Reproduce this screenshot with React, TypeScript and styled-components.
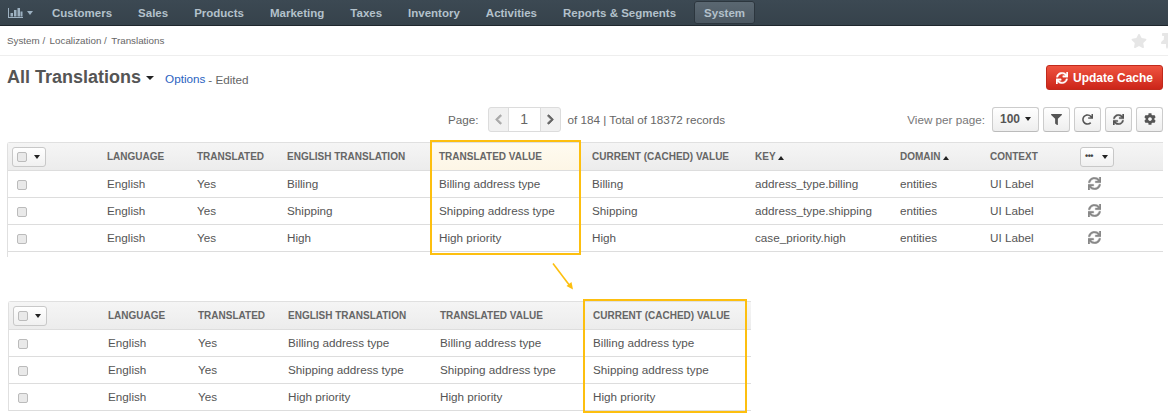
import { createGlobalStyle, styled } from 'styled-components';
import { FaChevronLeft, FaChevronRight, FaCog, FaFilter, FaRedo, FaStar, FaSync, FaThumbtack } from 'react-icons/fa';

const GlobalStyle = createGlobalStyle`
  html, body {
    margin: 0;
    padding: 0;
    background: #fff;
    overflow: hidden;
  }
  body {
    font-family: "Liberation Sans", Arial, sans-serif;
    font-size: 11.7px;
    color: #555;
  }
`;

const Page = styled.div`
  position: relative;
  width: 1168px;
  height: 414px;
  overflow: hidden;
`;

const NavBar = styled.nav`
  height: 25px;
  display: flex;
  align-items: center;
  padding-left: 8px;
  background: linear-gradient(#3c4953, #36424b);
  border-bottom: 1px solid #1f272d;
  color: #b3c1cb;
`;

const NavLogo = styled.div`
  display: flex;
  align-items: center;
  gap: 4px;
  width: 44px;
  color: #9db1c1;
`;

const NavItem = styled.a<{ $active?: boolean }>`
  margin-right: ${(p) => (p.$active ? '0' : '26px')};
  padding: ${(p) => (p.$active ? '4.5px 10px' : '0')};
  margin-left: ${(p) => (p.$active ? '-8px' : '0')};
  font-weight: bold;
  font-size: 11.5px;
  line-height: 14px;
  border-radius: 3px;
  background: ${(p) => (p.$active ? 'linear-gradient(#5b6872, #4b5761)' : 'transparent')};
  box-shadow: ${(p) => (p.$active ? 'inset 0 0 0 1px #2c363e' : 'none')};
`;

const Caret = styled.span<{ $color?: string; $up?: boolean; $size?: number }>`
  display: inline-block;
  width: 0;
  height: 0;
  border-left: ${(p) => p.$size ?? 4}px solid transparent;
  border-right: ${(p) => p.$size ?? 4}px solid transparent;
  ${(p) => (p.$up ? 'border-bottom' : 'border-top')}: 4px solid ${(p) => p.$color ?? '#222'};
`;

const Breadcrumbs = styled.div`
  height: 29px;
  display: flex;
  align-items: center;
  justify-content: space-between;
  padding-left: 7px;
  border-bottom: 1px solid #eee;
  font-size: 9.8px;
  color: #666;
`;

const Crumbs = styled.div`
  display: flex;
  gap: 4.5px;
`;

const PageTools = styled.div`
  display: flex;
  gap: 12px;
  margin-right: -7px;
  color: #e6e6e6;
  font-size: 16px;
`;

const TitleRow = styled.div`
  display: flex;
  align-items: flex-start;
  justify-content: space-between;
  padding: 9px 5px 0 7px;
  height: 41px;
`;

const TitleGroup = styled.div`
  display: flex;
  align-items: center;
  height: 25px;
`;

const Title = styled.h1`
  margin: 0 5px 0 0;
  font-size: 18px;
  line-height: 25px;
  font-weight: bold;
  color: #555;
`;

const Options = styled.a`
  margin: 2px 0 0 11px;
  color: #2a62bf;
`;

const Edited = styled.span`
  margin: 3px 0 0 3px;
  color: #666;
`;

const DangerButton = styled.button`
  display: flex;
  align-items: center;
  justify-content: center;
  gap: 5px;
  width: 117px;
  height: 25px;
  padding: 0;
  border: 1px solid #c12a1c;
  border-radius: 3px;
  background: linear-gradient(#ef5440, #cc2519);
  color: #fff;
  font: bold 12px "Liberation Sans", Arial, sans-serif;
`;

const Toolbar = styled.div`
  display: grid;
  grid-template-columns: 448px 1fr auto;
  align-items: center;
  height: 26px;
  padding-right: 5px;
  margin-bottom: 10px;
`;

const Pager = styled.div`
  grid-column: 2;
  display: flex;
  align-items: center;
  color: #666;
`;

const PagerBox = styled.div`
  display: flex;
  height: 23px;
  margin: 0 7px 0 9px;
  border: 1px solid #dcdcdc;
  border-radius: 3px;
  background: #f1f1f1;
`;

const PagerArrow = styled.span<{ $dim?: boolean }>`
  width: 19px;
  display: flex;
  align-items: center;
  justify-content: center;
  font-size: 11px;
  color: ${(p) => (p.$dim ? '#aaa' : '#666')};

  svg {
    stroke: currentColor;
    stroke-width: 40;
  }
`;

const PagerInput = styled.span`
  width: 31px;
  display: flex;
  align-items: center;
  justify-content: center;
  background: #fff;
  border-left: 1px solid #dcdcdc;
  border-right: 1px solid #dcdcdc;
  font-size: 14px;
`;

const ViewTools = styled.div`
  display: flex;
  align-items: center;
  gap: 4px;
  grid-column: 3;
`;

const ViewLabel = styled.span`
  margin-right: 3px;
  color: #777;
`;

const ToolButton = styled.button<{ $wide?: boolean }>`
  display: flex;
  align-items: center;
  justify-content: center;
  gap: 5px;
  width: ${(p) => (p.$wide ? '47px' : '27px')};
  height: 25px;
  padding: 0;
  border: 1px solid #ccc;
  border-bottom-color: #bbb;
  border-radius: 3px;
  background: linear-gradient(#fff, #eee);
  color: #555;
  font: bold 12px "Liberation Sans", Arial, sans-serif;
`;

const TableWrap = styled.div<{ $width: number; $left: number; $mt: number }>`
  position: relative;
  width: ${(p) => p.$width}px;
  margin: ${(p) => p.$mt}px 0 0 ${(p) => p.$left}px;
`;

const Table = styled.table`
  width: 100%;
  border-collapse: separate;
  border-spacing: 0;
  table-layout: fixed;
  border-left: 1px solid #e0e0e0;
  border-top: 1px solid #e0e0e0;
  border-top-left-radius: 3px;
`;

const Col = styled.col<{ $w: number }>`
  width: ${(p) => p.$w}px;
`;

const HeadCell = styled.th<{ $hl?: boolean; $pl?: number }>`
  height: 27px;
  padding: 0 0 0 ${(p) => p.$pl ?? 0}px;
  text-align: left;
  font-size: 10px;
  font-weight: bold;
  color: #666;
  white-space: nowrap;
  border-bottom: 1px solid #ddd;
  background: ${(p) => (p.$hl ? 'linear-gradient(#fffbf0, #fdf6e6)' : 'linear-gradient(#f5f5f5, #ececec)')};
`;

const Cell = styled.td<{ $pl?: number }>`
  height: 25px;
  padding: 0 0 1px ${(p) => p.$pl ?? 0}px;
  color: #555;
  white-space: nowrap;
  border-bottom: 1px solid #ddd;
`;

const HeadControl = styled.span<{ $ml?: number }>`
  display: inline-flex;
  align-items: center;
  justify-content: space-between;
  box-sizing: border-box;
  width: 34px;
  height: 20px;
  margin-left: ${(p) => p.$ml ?? 0}px;
  padding: 0 5px 0 4px;
  border: 1px solid #c8c8c8;
  border-radius: 3px;
  background: linear-gradient(#fff, #f0f0f0);
  vertical-align: middle;
`;

const CheckBox = styled.span<{ $inCell?: boolean }>`
  display: inline-block;
  box-sizing: border-box;
  width: 10px;
  height: 10px;
  margin-left: ${(p) => (p.$inCell ? '9px' : '0')};
  border: 1px solid #bbb;
  border-radius: 2px;
  background: #e9e9e9;
  vertical-align: middle;
`;

const Dots = styled.span`
  font-size: 9px;
  line-height: 8px;
  height: 10px;
  font-weight: bold;
  letter-spacing: -0.5px;
  color: #444;
`;

const RowIcon = styled.span`
  display: flex;
  align-items: center;
  margin-left: 8px;
  color: #888;
`;

const HighlightBox = styled.div<{ $x: number; $y: number; $w: number; $h: number }>`
  position: absolute;
  left: ${(p) => p.$x}px;
  top: ${(p) => p.$y}px;
  width: ${(p) => p.$w}px;
  height: ${(p) => p.$h}px;
  box-sizing: border-box;
  border: 2px solid #fdbf0f;
  pointer-events: none;
`;

const Arrow = styled.svg`
  position: absolute;
  left: 548px;
  top: 260px;
`;

const LeftEdge = styled.div`
  width: 1px;
  height: 5px;
  background: #e0e0e0;
`;

const topWidths = [99, 90, 90, 144, 149, 175, 145, 90, 90, 83];
const topRows = [
  ['Billing', 'Billing address type', 'Billing', 'address_type.billing'],
  ['Shipping', 'Shipping address type', 'Shipping', 'address_type.shipping'],
  ['High', 'High priority', 'High', 'case_priority.high'],
];
const bottomWidths = [99, 90, 90, 152, 153, 158];
const bottomRows = ['Billing address type', 'Shipping address type', 'High priority'];

function ChartIcon() {
  return (
    <svg width="15" height="10" viewBox="0 0 15 10" fill="currentColor">
      <path d="M0 0h1v9h14v1H0z" />
      <path d="M2.5 5H5v3.5H2.5zM6 2h2.5v6.5H6zM9.5 0H12v8.5H9.5zM12.5 3.5h2v5h-2z" />
    </svg>
  );
}

function BoldSync({ size }: { size: number }) {
  return <FaSync size={size} stroke="currentColor" strokeWidth={14} />;
}

function SelectAll({ ml }: { ml: number }) {
  return (
    <HeadControl $ml={ml}>
      <CheckBox />
      <Caret $size={3.5} />
    </HeadControl>
  );
}

export default function App() {
  return (
    <Page>
      <GlobalStyle />
      <NavBar>
        <NavLogo>
          <ChartIcon />
          <Caret $color="#9db1c1" $size={3} />
        </NavLogo>
        {['Customers', 'Sales', 'Products', 'Marketing', 'Taxes', 'Inventory', 'Activities', 'Reports & Segments'].map((item) => (
          <NavItem key={item}>{item}</NavItem>
        ))}
        <NavItem $active>System</NavItem>
      </NavBar>
      <Breadcrumbs>
        <Crumbs>
          <span>System /</span>
          <span>Localization /</span>
          <span>Translations</span>
        </Crumbs>
        <PageTools>
          <FaStar />
          <FaThumbtack />
        </PageTools>
      </Breadcrumbs>
      <TitleRow>
        <TitleGroup>
          <Title>All Translations</Title>
          <Caret />
          <Options>Options</Options>
          <Edited>- Edited</Edited>
        </TitleGroup>
        <DangerButton>
          <BoldSync size={12} />
          Update Cache
        </DangerButton>
      </TitleRow>
      <Toolbar>
        <Pager>
          Page:
          <PagerBox>
            <PagerArrow $dim><FaChevronLeft /></PagerArrow>
            <PagerInput>1</PagerInput>
            <PagerArrow><FaChevronRight /></PagerArrow>
          </PagerBox>
          of 184 | Total of 18372 records
        </Pager>
        <ViewTools>
          <ViewLabel>View per page:</ViewLabel>
          <ToolButton $wide>100 <Caret $size={3.5} /></ToolButton>
          <ToolButton><FaFilter size={11} /></ToolButton>
          <ToolButton><FaRedo size={11} /></ToolButton>
          <ToolButton><BoldSync size={11} /></ToolButton>
          <ToolButton><FaCog size={12} /></ToolButton>
        </ViewTools>
      </Toolbar>

      <TableWrap $width={1156} $left={7} $mt={0}>
        <Table>
          <colgroup>
            {topWidths.map((w, i) => <Col key={i} $w={w} />)}
          </colgroup>
          <thead>
            <tr>
              <HeadCell><SelectAll ml={4} /></HeadCell>
              <HeadCell>LANGUAGE</HeadCell>
              <HeadCell>TRANSLATED</HeadCell>
              <HeadCell>ENGLISH TRANSLATION</HeadCell>
              <HeadCell $hl $pl={8}>TRANSLATED VALUE</HeadCell>
              <HeadCell $pl={12}>CURRENT (CACHED) VALUE</HeadCell>
              <HeadCell>KEY <Caret $up $size={3.5} /></HeadCell>
              <HeadCell>DOMAIN <Caret $up $size={3.5} /></HeadCell>
              <HeadCell>CONTEXT</HeadCell>
              <HeadCell>
                <HeadControl><Dots>•••</Dots><Caret $size={3.5} /></HeadControl>
              </HeadCell>
            </tr>
          </thead>
          <tbody>
            {topRows.map((row) => (
              <tr key={row[3]}>
                <Cell><CheckBox $inCell /></Cell>
                <Cell>English</Cell>
                <Cell>Yes</Cell>
                <Cell>{row[0]}</Cell>
                <Cell $pl={8}>{row[1]}</Cell>
                <Cell $pl={12}>{row[2]}</Cell>
                <Cell>{row[3]}</Cell>
                <Cell>entities</Cell>
                <Cell>UI Label</Cell>
                <Cell><RowIcon><BoldSync size={13} /></RowIcon></Cell>
              </tr>
            ))}
          </tbody>
        </Table>
        <LeftEdge />
        <HighlightBox $x={423} $y={-2} $w={151} $h={115} />
      </TableWrap>

      <Arrow width="32" height="34" viewBox="0 0 32 34">
        <path d="M5 3.5 L22 26" stroke="#fdbf0f" strokeWidth="1.6" fill="none" />
        <path d="M25 29.5 L18.5 26 L23.5 22 Z" fill="#fdbf0f" />
      </Arrow>

      <TableWrap $width={743} $left={8} $mt={44}>
        <Table>
          <colgroup>
            {bottomWidths.map((w, i) => <Col key={i} $w={w} />)}
          </colgroup>
          <thead>
            <tr>
              <HeadCell><SelectAll ml={4} /></HeadCell>
              <HeadCell>LANGUAGE</HeadCell>
              <HeadCell>TRANSLATED</HeadCell>
              <HeadCell>ENGLISH TRANSLATION</HeadCell>
              <HeadCell>TRANSLATED VALUE</HeadCell>
              <HeadCell>CURRENT (CACHED) VALUE</HeadCell>
            </tr>
          </thead>
          <tbody>
            {bottomRows.map((row) => (
              <tr key={row}>
                <Cell><CheckBox $inCell /></Cell>
                <Cell>English</Cell>
                <Cell>Yes</Cell>
                <Cell>{row}</Cell>
                <Cell>{row}</Cell>
                <Cell>{row}</Cell>
              </tr>
            ))}
          </tbody>
        </Table>
        <HighlightBox $x={575} $y={-2} $w={164} $h={114} />
      </TableWrap>
    </Page>
  );
}
